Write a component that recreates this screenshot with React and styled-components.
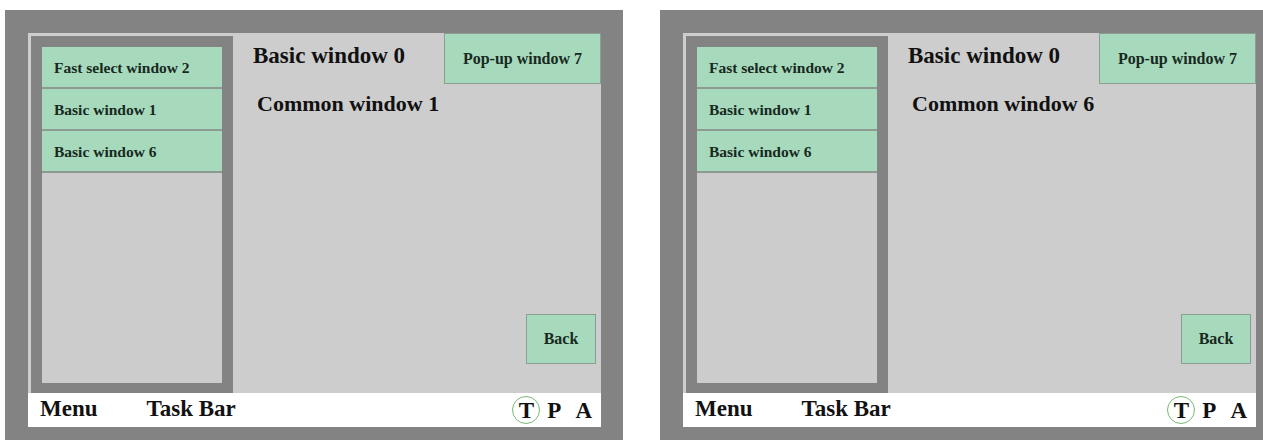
import React from 'react'
import styled, {createGlobalStyle} from 'styled-components'

const Global = createGlobalStyle`
  html, body {
    margin: 0;
    padding: 0;
    background: #ffffff;
    overflow: hidden;
  }
  body {
    font-family: "Liberation Serif", "Times New Roman", serif;
  }
`

const Page = styled.div`
  display: flex;
  gap: 37px;
  padding: 10px 0 0 5px;
  width: 1263px;
  height: 441px;
  box-sizing: border-box;
  overflow: hidden;
`

const Screen = styled.div`
  flex-shrink: 0;
  width: 618px;
  height: 430px;
  box-sizing: border-box;
  padding: 23px 22px 13px 23px;
  background: #838383;
`

const Inner = styled.div`
  display: flex;
  flex-direction: column;
  height: 100%;
`

const Workspace = styled.div`
  flex: 1;
  display: flex;
  background: #cdcdcd;
  min-height: 0;
`

const SideFrame = styled.div`
  width: 202px;
  margin: 3px 0 0 3px;
  padding: 11px 11px 10px;
  box-sizing: border-box;
  background: #838383;
  display: flex;
`

const SideList = styled.div`
  flex: 1;
  display: flex;
  flex-direction: column;
  background: #cccccc;
`

const SideButton = styled.div`
  height: 42px;
  box-sizing: border-box;
  display: flex;
  align-items: center;
  padding: 1px 0 0 12px;
  background: #a7d9bd;
  border-bottom: 2px solid #8c9a91;
  color: #182a1e;
  font-weight: bold;
  font-size: 15.5px;
  line-height: 1;
`

const Main = styled.div`
  flex: 1;
  display: flex;
  flex-direction: column;
`

const Header = styled.div`
  display: flex;
  justify-content: space-between;
  align-items: flex-start;
`

const Title = styled.div`
  margin: 11px 0 0 20px;
  font-size: ${p => p.$size}px;
  font-weight: bold;
  line-height: 1;
  color: #111111;
`

const Sub = styled(Title)`
  margin: 9px 0 0 24px;
`

const GreenButton = styled.div`
  width: ${p => p.$w}px;
  height: ${p => p.$h}px;
  box-sizing: border-box;
  display: flex;
  align-items: center;
  justify-content: center;
  background: #a7d9bd;
  border: 1px solid #8c9d92;
  color: #182a1e;
  font-weight: bold;
  font-size: 16px;
  line-height: 1;
`

const BackButton = styled(GreenButton)`
  align-self: flex-end;
  margin: auto 5px 29px 0;
`

const TaskBar = styled.div`
  height: 34px;
  flex-shrink: 0;
  display: flex;
  align-items: flex-start;
  padding: 4px 9px 0 12px;
  box-sizing: border-box;
  background: #ffffff;
  color: #111111;
  font-weight: bold;
  font-size: 23px;
  line-height: 1;
`

const Label = styled.span`
  margin-right: ${p => p.$gap || 0}px;
`

const Modes = styled.div`
  margin-left: auto;
  display: flex;
  align-items: center;
`

const Circled = styled.span`
  width: 28px;
  height: 28px;
  margin-top: -1px;
  box-sizing: border-box;
  display: flex;
  align-items: center;
  justify-content: center;
  border: 1.5px solid #79b972;
  border-radius: 50%;
  margin-right: 7px;
`

const Mode = styled.span`
  margin-right: ${p => p.$gap || 0}px;
`

const ScreenView = ({common}) =>
  <Screen>
    <Inner>
      <Workspace>
        <SideFrame>
          <SideList>
            <SideButton>Fast select window 2</SideButton>
            <SideButton>Basic window 1</SideButton>
            <SideButton>Basic window 6</SideButton>
          </SideList>
        </SideFrame>
        <Main>
          <Header>
            <Title $size={23}>Basic window 0</Title>
            <GreenButton $w={157} $h={51}>Pop-up window 7</GreenButton>
          </Header>
          <Sub $size={22}>Common window {common}</Sub>
          <BackButton $w={70} $h={50}>Back</BackButton>
        </Main>
      </Workspace>
      <TaskBar>
        <Label $gap={49}>Menu</Label>
        <Label>Task Bar</Label>
        <Modes>
          <Circled>T</Circled>
          <Mode $gap={14}>P</Mode>
          <Mode>A</Mode>
        </Modes>
      </TaskBar>
    </Inner>
  </Screen>

const App = () =>
  <>
    <Global/>
    <Page>
      <ScreenView common={1}/>
      <ScreenView common={6}/>
    </Page>
  </>

export default App
